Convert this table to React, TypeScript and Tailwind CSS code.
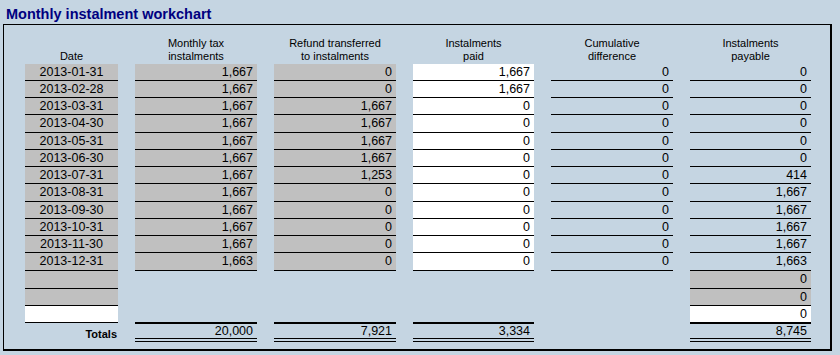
type Fill = "gray" | "white" | "none";

type Row = {
	date: string;
	monthly: string;
	refund: string;
	paid: string;
	cumulative: string;
	payable: string;
};

const rows: Row[] = [
	{ date: "2013-01-31", monthly: "1,667", refund: "0", paid: "1,667", cumulative: "0", payable: "0" },
	{ date: "2013-02-28", monthly: "1,667", refund: "0", paid: "1,667", cumulative: "0", payable: "0" },
	{ date: "2013-03-31", monthly: "1,667", refund: "1,667", paid: "0", cumulative: "0", payable: "0" },
	{ date: "2013-04-30", monthly: "1,667", refund: "1,667", paid: "0", cumulative: "0", payable: "0" },
	{ date: "2013-05-31", monthly: "1,667", refund: "1,667", paid: "0", cumulative: "0", payable: "0" },
	{ date: "2013-06-30", monthly: "1,667", refund: "1,667", paid: "0", cumulative: "0", payable: "0" },
	{ date: "2013-07-31", monthly: "1,667", refund: "1,253", paid: "0", cumulative: "0", payable: "414" },
	{ date: "2013-08-31", monthly: "1,667", refund: "0", paid: "0", cumulative: "0", payable: "1,667" },
	{ date: "2013-09-30", monthly: "1,667", refund: "0", paid: "0", cumulative: "0", payable: "1,667" },
	{ date: "2013-10-31", monthly: "1,667", refund: "0", paid: "0", cumulative: "0", payable: "1,667" },
	{ date: "2013-11-30", monthly: "1,667", refund: "0", paid: "0", cumulative: "0", payable: "1,667" },
	{ date: "2013-12-31", monthly: "1,663", refund: "0", paid: "0", cumulative: "0", payable: "1,663" },
];

const tall = [3, 7, 11];

const fillClass = (fill: Fill) =>
	fill === "gray" ? "bg-[#c0c0c0]" : fill === "white" ? "bg-white" : "";

function Cell({
	text,
	fill,
	tallRow,
	center,
	noLine,
}: {
	text?: string;
	fill: Fill;
	tallRow?: boolean;
	center?: boolean;
	noLine?: boolean;
}) {
	return (
		<div
			className={`${tallRow ? "h-[18px]" : "h-[17px]"} ${noLine ? "" : "border-b border-black"} ${fillClass(fill)} ${center ? "text-center" : "text-right pr-[4px]"} pt-px leading-[15px] text-[12.5px]`}
		>
			{text}
		</div>
	);
}

function Header({ lines }: { lines: string[] }) {
	return (
		<div className="h-[39px] flex flex-col items-center justify-end pb-px text-[11px] leading-[13px]">
			{lines.map((l) => (
				<span key={l}>{l}</span>
			))}
		</div>
	);
}

function Total({ value }: { value: string }) {
	return (
		<div className="-mt-px">
			<div className="h-[17px] border-t-2 border-b border-black text-right pr-[4px] leading-[14px] text-[12.5px]">
				{value}
			</div>
			<div className="mt-[2px] h-px bg-black" />
		</div>
	);
}

export default function App() {
	return (
		<div className="w-[840px] h-[355px] bg-[#c5d5e2] text-black font-['Liberation_Sans',Arial,sans-serif] overflow-hidden">
			<div className="h-[24px] pt-[5px] pl-[6px] text-[14.5px] leading-[19px] font-bold text-[#000080]">
				Monthly instalment workchart
			</div>

			<div className="ml-[3px] w-[829px] h-[327px] border-l border-t border-r-2 border-b-2 border-black pl-[21px]">
				<div className="grid grid-cols-[93px_122px_122px_121px_122px_121px] gap-x-[17px]">
					{/* headers */}
					<Header lines={["Date"]} />
					<Header lines={["Monthly tax", "instalments"]} />
					<Header lines={["Refund transferred", "to instalments"]} />
					<Header lines={["Instalments", "paid"]} />
					<Header lines={["Cumulative", "difference"]} />
					<Header lines={["Instalments", "payable"]} />

					{/* monthly rows */}
					{rows.map((r, i) => {
						const t = tall.includes(i);
						return [
							<Cell key={r.date + "d"} text={r.date} fill="gray" tallRow={t} center />,
							<Cell key={r.date + "m"} text={r.monthly} fill="gray" tallRow={t} />,
							<Cell key={r.date + "r"} text={r.refund} fill="gray" tallRow={t} />,
							<Cell key={r.date + "p"} text={r.paid} fill="white" tallRow={t} />,
							<Cell key={r.date + "c"} text={r.cumulative} fill="none" tallRow={t} />,
							<Cell key={r.date + "y"} text={r.payable} fill="none" tallRow={t} />,
						];
					})}

					{/* adjustment rows */}
					<Cell fill="gray" tallRow />
					<div />
					<div />
					<div />
					<div />
					<Cell text="0" fill="gray" tallRow />

					<Cell fill="gray" />
					<div />
					<div />
					<div />
					<div />
					<Cell text="0" fill="gray" />

					<Cell fill="white" />
					<div />
					<div />
					<div />
					<div />
					<Cell text="0" fill="white" noLine />

					{/* totals */}
					<div className="pt-[5px] pr-px text-right text-[11px] leading-[13px] font-bold">
						Totals
					</div>
					<Total value="20,000" />
					<Total value="7,921" />
					<Total value="3,334" />
					<div />
					<Total value="8,745" />
				</div>
			</div>
		</div>
	);
}
